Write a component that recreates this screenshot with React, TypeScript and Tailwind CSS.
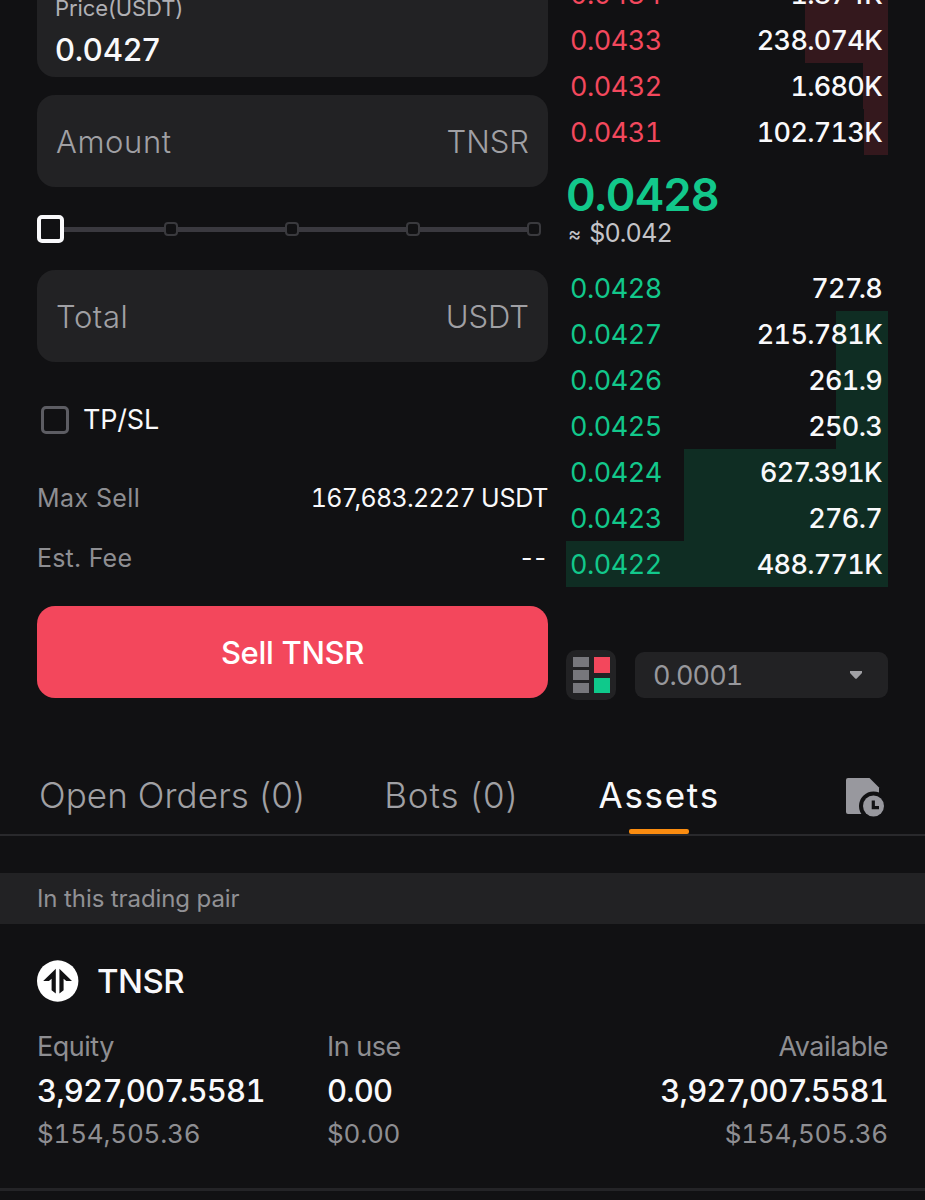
import React, { useState } from 'react';

interface BookRow {
  price: string;
  amount: string;
  depth: number;
}

// depth is the width of the bar behind the row, in px
const asks: BookRow[] = [
  { price: '0.0434', amount: '1.874K', depth: 83 },
  { price: '0.0433', amount: '238.074K', depth: 83 },
  { price: '0.0432', amount: '1.680K', depth: 25 },
  { price: '0.0431', amount: '102.713K', depth: 24 },
];

const bids: BookRow[] = [
  { price: '0.0428', amount: '727.8', depth: 0 },
  { price: '0.0427', amount: '215.781K', depth: 52 },
  { price: '0.0426', amount: '261.9', depth: 52 },
  { price: '0.0425', amount: '250.3', depth: 52 },
  { price: '0.0424', amount: '627.391K', depth: 204 },
  { price: '0.0423', amount: '276.7', depth: 204 },
  { price: '0.0422', amount: '488.771K', depth: 322 },
];

const tabs = [
  { name: 'Open Orders (0)', className: 'mr-[79px] tracking-[0.1px]' },
  { name: 'Bots (0)', className: 'mr-[80px] tracking-[0.85px]' },
  { name: 'Assets', className: 'tracking-[1.7px]' },
];

// Tabular digits, with a 7 pulled closer to the separator after it
const Num = ({ value }: { value: string }) => (
  <span className="tabular-nums">
    {value.split(/(7(?=[.,]))/).map((part, i) =>
      part === '7' && i % 2 === 1 ? (
        <span key={i} className="tracking-[-0.14em]">{part}</span>
      ) : (
        part
      )
    )}
  </span>
);

const OrderRow = ({ row, side }: { row: BookRow; side: 'ask' | 'bid' }) => (
  <div className="relative flex h-[46px] shrink-0 items-center justify-between pl-1 pr-[6px] text-[27px]">
    <div
      className={`absolute inset-y-0 right-0 ${side === 'ask' ? 'bg-[#34181d]' : 'bg-[#0f2d23]'}`}
      style={{ width: row.depth }}
    />
    <span className={`relative tracking-[-0.5px] ${side === 'ask' ? 'text-[#f3485d]' : 'text-[#12c88b]'}`}>
      <Num value={row.price} />
    </span>
    <span className="relative font-medium tracking-[-0.7px] text-[#f9f9fb]">
      <Num value={row.amount} />
    </span>
  </div>
);

const Field = ({ label, unit }: { label: string; unit: string }) => (
  <div className="flex h-[92px] items-center justify-between rounded-[18px] bg-[#222224] px-[19px] text-[31px] font-light text-[#a0a0a4]">
    <span className="tracking-[0.6px]">{label}</span>
    <span>{unit}</span>
  </div>
);

const Slider = () => (
  <div className="flex h-7 items-center pr-[7px]">
    <div className="h-7 w-[27px] rounded-[5px] border-4 border-[#f9f9fb]" />
    {[0, 1, 2, 3].map((step) => (
      <React.Fragment key={step}>
        <div className={`h-[5px] bg-[#3a393f] ${step === 0 ? 'w-[100px]' : 'flex-1'}`} />
        <div className="h-[14px] w-[14px] rounded-[4px] border-2 border-[#3a3a3e]" />
      </React.Fragment>
    ))}
  </div>
);

const HistoryIcon = () => (
  <svg width="40" height="40" viewBox="0 0 40 40">
    <path d="M3 1H24.5L34 10.5V37H3Q1 37 1 35V3Q1 1 3 1Z" fill="#98989e" />
    <circle cx="28.5" cy="29" r="14.5" fill="#111113" />
    <circle cx="28.5" cy="29" r="10.5" fill="#98989e" />
    <path d="M28.3 23.5V30.7H34" fill="none" stroke="#111113" strokeWidth="3.2" />
  </svg>
);

const TnsrLogo = () => (
  <svg width="42" height="42" viewBox="0 0 42 42">
    <circle cx="20.7" cy="21" r="20.7" fill="#fff" />
    <path d="M18.8 8.8V33.5L14.6 30.3V18.8L11.9 21H6.2Z" fill="#111113" />
    <path d="M22.4 8.8V33.5L26.6 30.3V18.8L29.3 21H35Z" fill="#111113" />
  </svg>
);

interface BalanceProps {
  label: string;
  value: string;
  fiat: string;
  className?: string;
}

const Balance = ({ label, value, fiat, className }: BalanceProps) => (
  <div className={className}>
    <div className="h-[34px] text-[27px] leading-[34px] tracking-[-0.5px] text-[#8e8e92]">{label}</div>
    <div className="mt-[6px] h-[42px] text-[31px] leading-[42px] font-medium tracking-[-0.8px]">
      <Num value={value} />
    </div>
    <div className="h-[43px] text-[26px] leading-[43px] tabular-nums tracking-[-0.2px] text-[#8e8e92]">{fiat}</div>
  </div>
);

const App = () => {
  const [tab, setTab] = useState('Assets');

  return (
    <div className="h-[1200px] w-[925px] overflow-hidden bg-[#111113] font-['Inter','Liberation_Sans',sans-serif] leading-none text-[#f9f9fb] whitespace-nowrap">
      <div className="flex h-[745px] justify-between px-[37px]">
        {/* Order form */}
        <div className="w-[511px]">
          <div className="h-[77px] rounded-b-[18px] bg-[#222224] pl-[18px]">
            <div className="h-4 text-[22px] leading-4 tracking-[-0.1px] text-[#b0b0b4]">Price(USDT)</div>
            <div className="mt-[18px] text-[31px] font-medium">0.0427</div>
          </div>
          <div className="mt-[18px]">
            <Field label="Amount" unit="TNSR" />
          </div>
          <div className="mt-7 mb-[27px]">
            <Slider />
          </div>
          <Field label="Total" unit="USDT" />
          <div className="mt-[43px] flex h-[29px] items-center gap-[14px] pl-1">
            <div className="h-7 w-7 rounded-[5px] border-[3px] border-[#5d5d63]" />
            <span className="text-[27px] tracking-[-0.2px]">TP/SL</span>
          </div>
          <div className="mt-[47px] flex h-[34px] items-center justify-between text-[25px]">
            <span className="tracking-[0.4px] text-[#8e8e92]">Max Sell</span>
            <span className="tracking-[-0.7px]">
              <Num value="167,683.2227" />
              <span className="ml-[6px] tracking-[-0.3px]">USDT</span>
            </span>
          </div>
          <div className="mt-[26px] flex h-[34px] items-center justify-between text-[25px]">
            <span className="tracking-[0.2px] text-[#8e8e92]">Est. Fee</span>
            <span className="tracking-[2px]">--</span>
          </div>
          <button className="mt-[31px] flex h-[92px] w-full items-center justify-center rounded-[18px] bg-[#f3475c] text-[31px] font-medium tracking-[-0.3px] text-white">
            Sell TNSR
          </button>
        </div>

        {/* Order book */}
        <div className="w-[322px]">
          <div className="flex h-[155px] flex-col justify-end overflow-hidden">
            {asks.map((row) => (
              <OrderRow key={row.price} row={row} side="ask" />
            ))}
          </div>
          <div className="mt-[17px] text-[45px] font-semibold tracking-[-0.9px] text-[#12c88b]">0.0428</div>
          <div className="mt-1 flex h-[25px] items-center gap-2 pl-[2px] text-[25px] text-[#c4c4c8]">
            <span className="text-[20px] leading-4">≈</span>
            <span className="tracking-[-0.4px]">$0.042</span>
          </div>
          <div className="mt-[19px]">
            {bids.map((row) => (
              <OrderRow key={row.price} row={row} side="bid" />
            ))}
          </div>
          <div className="mt-[63px] flex items-center justify-between">
            <div className="flex h-[50px] w-[50px] items-center justify-center gap-[5px] rounded-[10px] bg-[#222224]">
              <div className="flex flex-col gap-[3px]">
                <div className="h-[10px] w-4 bg-[#77777c]" />
                <div className="h-[10px] w-4 bg-[#77777c]" />
                <div className="h-[10px] w-4 bg-[#77777c]" />
              </div>
              <div className="flex flex-col gap-[5px]">
                <div className="h-[15.5px] w-4 bg-[#f3475c]" />
                <div className="h-[15.5px] w-4 bg-[#0fc98b]" />
              </div>
            </div>
            <div className="flex h-[46px] w-[253px] items-center justify-between rounded-[9px] bg-[#222224] pl-[18px] pr-[26px]">
              <span className="text-[27px] tabular-nums tracking-[-0.9px] text-[#98989c]">0.0001</span>
              <svg width="12" height="8" viewBox="0 0 12 8">
                <path d="M0 0H12V2L6.8 7.5Q6 8.2 5.2 7.5L0 2Z" fill="#a0a0a4" />
              </svg>
            </div>
          </div>
        </div>
      </div>

      {/* Tabs */}
      <div className="flex h-[91px] border-b-2 border-[#29292c] pl-[39px] pr-10 text-[35px]">
        {tabs.map(({ name, className }) => (
          <button
            key={name}
            onClick={() => setTab(name)}
            className={`flex h-[89px] flex-col items-center pt-[33px] leading-none ${className} ${
              tab === name ? 'text-[#f9f9fb]' : 'font-light text-[#a0a0a4]'
            }`}
          >
            <span>{name}</span>
            {tab === name && <span className="mt-4 h-[5px] w-[60px] rounded-[2px] bg-[#fa8c10]" />}
          </button>
        ))}
        <div className="ml-auto pt-8">
          <HistoryIcon />
        </div>
      </div>

      <div className="mt-[37px] flex h-[51px] items-center bg-[#222224] pl-[37px] text-[24px] tracking-[-0.1px] text-[#919195]">
        In this trading pair
      </div>

      {/* Asset card */}
      <div className="h-[267px] border-b-[3px] border-[#242427] px-[37px] pt-9">
        <div className="flex h-[42px] items-center gap-[18px]">
          <TnsrLogo />
          <span className="text-[33px] font-medium tracking-[-0.5px]">TNSR</span>
        </div>
        <div className="mt-7 flex">
          <Balance className="w-[290px]" label="Equity" value="3,927,007.5581" fiat="$154,505.36" />
          <Balance label="In use" value="0.00" fiat="$0.00" />
          <Balance className="ml-auto text-right" label="Available" value="3,927,007.5581" fiat="$154,505.36" />
        </div>
      </div>
    </div>
  );
};

export default App;
